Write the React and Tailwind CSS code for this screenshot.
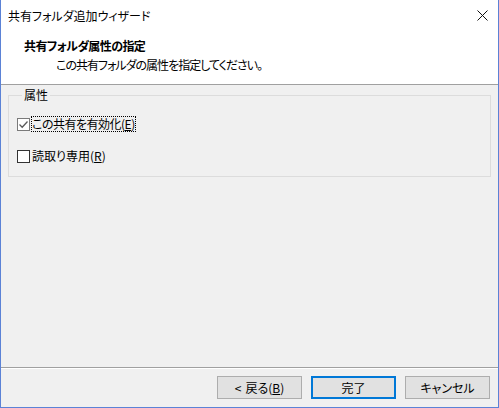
import React from "react";

const font = "font-['Noto_Sans_CJK_JP','Noto_Sans',sans-serif] [font-feature-settings:'palt']";

function Check({ checked }) {
  return (
    <span className={`w-[13px] h-[13px] shrink-0 bg-white border ${checked ? "border-[#7a7a7a]" : "border-[#333333]"} flex items-center justify-center`}>
      {checked && (
        <svg width="11" height="11" viewBox="0 0 11 11">
          <path d="M1.5 5.5 L4.2 8.2 L9.5 2.5" fill="none" stroke="#5a5a5a" strokeWidth="1.3" />
        </svg>
      )}
    </span>
  );
}

function Btn({ children, primary }) {
  return (
    <button
      className={`w-[85px] h-[23px] bg-[#e1e1e1] text-[12px] leading-none text-black flex items-center justify-center ${
        primary ? "border-2 border-[#0078d7]" : "border border-[#adadad]"
      }`}
    >
      {children}
    </button>
  );
}

export default function App() {
  return (
    <div className={`w-[499px] h-[408px] flex flex-col bg-white border-l border-r border-b border-[#5b82d6] text-black ${font}`}>
      <div className="h-[31px] shrink-0 flex items-center justify-between pl-[7px] pr-[10px]">
        <span className="text-[12px] leading-none">共有フォルダ追加ウィザード</span>
        <svg width="11" height="11" viewBox="0 0 11 11">
          <path d="M0.5 0.5 L10.5 10.5 M10.5 0.5 L0.5 10.5" stroke="#111" strokeWidth="1" />
        </svg>
      </div>
      <div className="h-[53px] shrink-0 flex flex-col pl-[23px] pt-[7px]">
        <div className="text-[12px] leading-[16px] font-bold tracking-[-0.6px]">共有フォルダ属性の指定</div>
        <div className="text-[12px] leading-[16px] pl-[32px] mt-[3px] tracking-[-1px]">この共有フォルダの属性を指定してください。</div>
      </div>
      <div className="h-[2px] shrink-0 border-t border-[#a0a0a0] bg-[#f0f0f0]" />
      <div className="flex-1 bg-[#f0f0f0] flex flex-col">
        <fieldset className="mx-[7px] mt-[1px] border border-[#dcdcdc] pl-[8px] pb-[12px]">
          <legend className="ml-[5px] px-[2px] text-[12px] leading-[16px]">属性</legend>
          <div className="flex items-center h-[16px] mt-[13px]">
            <Check checked />
            <span className="ml-[1px] border border-dotted border-black text-[12px] leading-[14px] tracking-[-0.5px]">
              この共有を有効化(<span className="underline">E</span>)
            </span>
          </div>
          <div className="flex items-center h-[16px] mt-[16px]">
            <Check />
            <span className="ml-[2px] text-[12px] leading-[14px]">
              読取り専用(<span className="underline">R</span>)
            </span>
          </div>
        </fieldset>
      </div>
      <div className="h-[2px] shrink-0 border-t border-[#a0a0a0] bg-white" />
      <div className="h-[38px] shrink-0 bg-[#f0f0f0] flex justify-end items-start pt-[7px] pr-[8px] gap-[9px]">
        <Btn>
          <span className="mr-[4px]">&lt;</span>戻る(<span className="underline">B</span>)
        </Btn>
        <Btn primary>完了</Btn>
        <Btn>キャンセル</Btn>
      </div>
    </div>
  );
}
